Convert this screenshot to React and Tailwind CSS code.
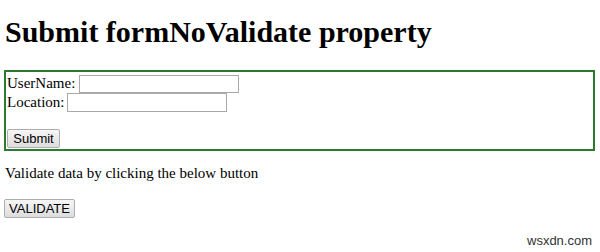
export default function App() {
  const serif = "font-['Liberation_Serif','Times_New_Roman',serif]";
  const btn =
    "font-['Liberation_Sans',Arial,sans-serif] text-[13px] text-black leading-none border border-[#adadad] rounded-[2px] bg-gradient-to-b from-[#f6f6f6] to-[#dddddd] flex items-center justify-center";
  return (
    <div className={`relative w-[600px] h-[252px] bg-white overflow-hidden text-black ${serif}`}>
      <h1 className="ml-[5px] pt-[17px] text-[30px] leading-[30px] font-bold whitespace-nowrap">
        Submit formNoValidate property
      </h1>
      <form
        className="mt-[23px] ml-[4px] w-[591px] h-[81px] border-2 border-[#2c7a2c] pl-[1px] pt-[2px] text-[15px]"
        onSubmit={(e) => e.preventDefault()}
      >
        <div className="flex items-center h-[19px]">
          <span className="leading-none">UserName:</span>
          <input className="ml-[4px] w-[160px] h-[18px] border border-[#a9a9a9] bg-white outline-none" />
        </div>
        <div className="flex items-center h-[19px]">
          <span className="leading-none">Location:</span>
          <input className="ml-[3px] w-[160px] h-[19px] border border-[#a9a9a9] bg-white outline-none" />
        </div>
        <div className="h-[17px]" />
        <button type="button" className={`${btn} w-[53px] h-[19px]`}>
          Submit
        </button>
      </form>
      <p className="ml-[5px] mt-[13px] text-[15px] leading-[19px] whitespace-nowrap">
        Validate data by clicking the below button
      </p>
      <button type="button" className={`${btn} ml-[4px] mt-[16px] w-[71px] h-[19px]`}>
        VALIDATE
      </button>
      <div className="absolute left-[527px] top-[234px] font-['Liberation_Sans',Arial,sans-serif] text-[13px] text-[#333] leading-none">
        wsxdn.com
      </div>
    </div>
  );
}
